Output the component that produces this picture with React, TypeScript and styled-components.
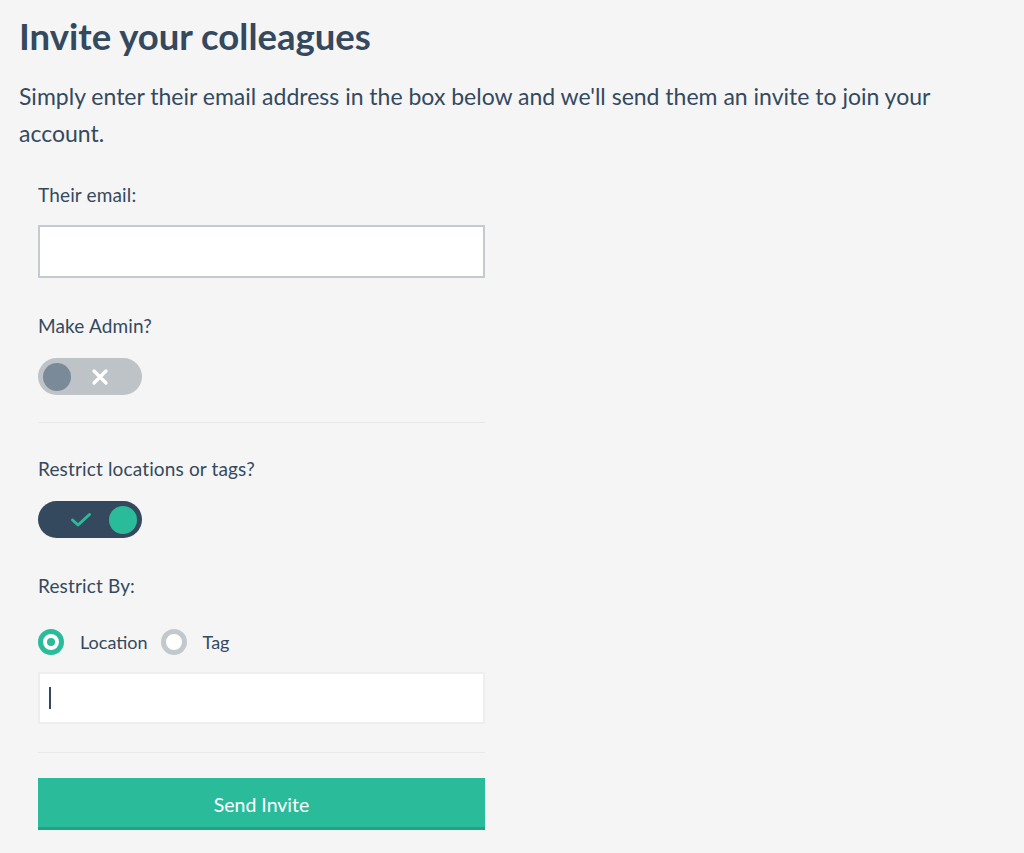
import React from 'react';
import styled, { createGlobalStyle, css } from 'styled-components';

const GlobalStyle = createGlobalStyle`
  html, body {
    margin: 0;
    padding: 0;
    background: #f5f5f5;
  }

  body {
    font-family: Lato, 'Open Sans', sans-serif;
    color: #34495e;
  }
`;

const Page = styled.div`
  padding: 14px 19px 40px;
`;

const Title = styled.h1`
  margin: 0;
  font-size: 36.5px;
  line-height: 44px;
  font-weight: 700;
  color: #34495e;
`;

const Intro = styled.p`
  margin: 20px 0 0;
  max-width: 940px;
  font-size: 23px;
  line-height: 37px;
  font-weight: 400;
`;

const Form = styled.form`
  width: 447px;
  margin: 31px 0 0 19px;
  display: flex;
  flex-direction: column;
`;

const Label = styled.label<{ $gap?: number }>`
  display: block;
  font-size: 19px;
  letter-spacing: 0.15px;
  line-height: 24px;
  margin-top: ${({ $gap }) => $gap ?? 0}px;
`;

const TextBox = styled.div<{ $strong?: boolean }>`
  box-sizing: border-box;
  height: 52px;
  background: #fff;
  display: flex;
  align-items: center;
  padding-left: 9px;
  ${({ $strong }) =>
    $strong
      ? css`
          margin-top: 18px;
          border: 2px solid #c4cbd0;
          height: 53px;
        `
      : css`
          margin-top: 17px;
          border: 2px solid #eceef0;
        `}
`;

const Caret = styled.span`
  width: 2px;
  height: 22px;
  background: #34495e;
`;

const Toggle = styled.div<{ $on?: boolean }>`
  position: relative;
  width: 104px;
  height: 37px;
  margin-top: 20px;
  border-radius: 19px;
  background: ${({ $on }) => ($on ? '#34495e' : '#bdc3c7')};
  display: flex;
  align-items: center;
  padding: 0 5px;
  box-sizing: border-box;
  justify-content: ${({ $on }) => ($on ? 'flex-end' : 'flex-start')};
`;

const Knob = styled.span<{ $on?: boolean }>`
  width: 28px;
  height: 28px;
  border-radius: 50%;
  background: ${({ $on }) => ($on ? '#2abb9b' : '#7b8a99')};
`;

const ToggleIcon = styled.svg<{ $left: number }>`
  position: absolute;
  top: 50%;
  left: ${({ $left }) => $left}px;
  transform: translate(-50%, -50%);
`;

const Divider = styled.hr<{ $top: number }>`
  margin: ${({ $top }) => $top}px 0 0;
  border: none;
  height: 1px;
  background: #e9e9e9;
`;

const RadioRow = styled.div`
  display: flex;
  align-items: center;
  margin-top: 31px;
`;

const RadioOption = styled.label`
  display: flex;
  align-items: center;
  gap: 16px;
  font-size: 18px;
  line-height: 26px;
  margin-right: 13px;
`;

const RadioDot = styled.span<{ $checked?: boolean }>`
  box-sizing: border-box;
  width: 26px;
  height: 26px;
  border-radius: 50%;
  border: 5px solid ${({ $checked }) => ($checked ? '#2abb9b' : '#c3c8cc')};
  background: #fff;
  display: flex;
  align-items: center;
  justify-content: center;

  &::after {
    content: '';
    width: 8px;
    height: 8px;
    border-radius: 50%;
    background: ${({ $checked }) => ($checked ? '#2abb9b' : 'transparent')};
  }
`;

const SendButton = styled.button`
  margin-top: 25px;
  height: 52px;
  border: none;
  border-bottom: 3px solid #22a386;
  background: #2abb9b;
  color: #fff;
  font-family: Lato, 'Open Sans', sans-serif;
  font-size: 19.5px;
  font-weight: 400;
  cursor: pointer;
  padding: 3px 0 0;
`;

export default function App() {
  return (
    <>
      <GlobalStyle />
      <Page>
        <Title>Invite your colleagues</Title>
        <Intro>
          Simply enter their email address in the box below and we'll send them an invite to join
          your account.
        </Intro>
        <Form onSubmit={(e) => e.preventDefault()}>
          <Label>Their email:</Label>
          <TextBox $strong />

          <Label $gap={36}>Make Admin?</Label>
          <Toggle>
            <Knob />
            <ToggleIcon $left={62} width="17" height="17" viewBox="0 0 17 17">
              <path d="M2.5 2.5 L14.5 14.5 M14.5 2.5 L2.5 14.5" stroke="#fff" strokeWidth="3.2" strokeLinecap="round" />
            </ToggleIcon>
          </Toggle>

          <Divider $top={27} />

          <Label $gap={34}>Restrict locations or tags?</Label>
          <Toggle $on>
            <ToggleIcon $left={43} width="22" height="16" viewBox="0 0 22 16">
              <path
                d="M2.5 8 L8 13 L19.5 2.5"
                fill="none"
                stroke="#2abb9b"
                strokeWidth="3"
                strokeLinecap="round"
                strokeLinejoin="round"
              />
            </ToggleIcon>
            <Knob $on />
          </Toggle>

          <Label $gap={36}>Restrict By:</Label>
          <RadioRow>
            <RadioOption>
              <RadioDot $checked />
              Location
            </RadioOption>
            <RadioOption>
              <RadioDot />
              Tag
            </RadioOption>
          </RadioRow>
          <TextBox>
            <Caret />
          </TextBox>

          <Divider $top={28} />

          <SendButton type="submit">Send Invite</SendButton>
        </Form>
      </Page>
    </>
  );
}
